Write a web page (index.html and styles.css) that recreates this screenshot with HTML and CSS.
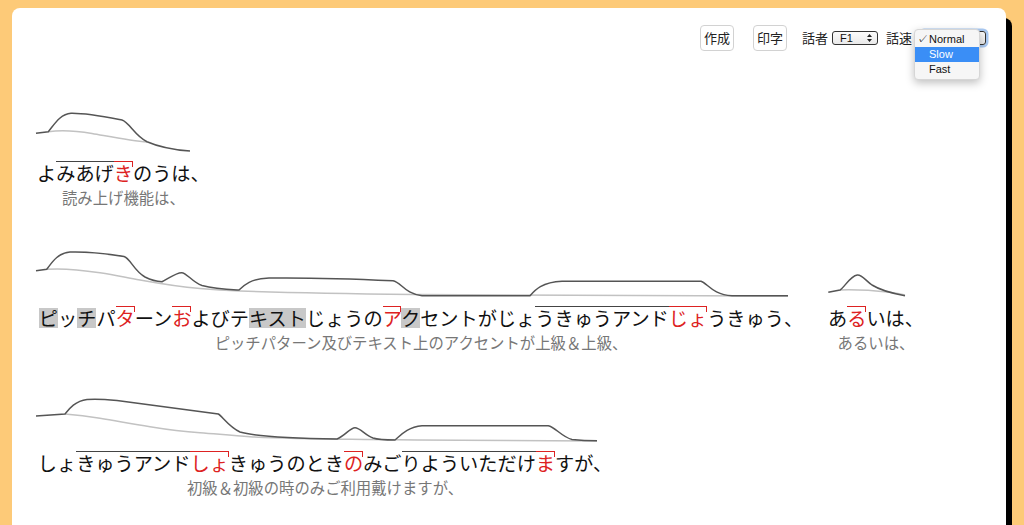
FILE: index.html
```html
<!DOCTYPE html>
<html lang="ja">
<head>
    <meta charset="UTF-8">
    <meta name="viewport" content="width=device-width, initial-scale=1.0">
    <title>よみあげ - アクセント表示</title>
    <link rel="stylesheet" href="styles.css">
</head>
<body>
    <div class="card">
        <div class="toolbar">
            <button class="btn">作成</button>
            <button class="btn btn-print">印字</button>
            <div class="field field-speaker">
                <span class="field-label">話者</span>
                <span class="select select-small">F1
                    <svg class="arrows" width="5" height="8" viewBox="0 0 5 8"><path d="M2.5 0 L5 3 L0 3 Z M2.5 8 L5 5 L0 5 Z" fill="#222"/></svg>
                </span>
            </div>
            <div class="field field-speed">
                <span class="field-label">話速</span>
                <span class="select select-speed open">
                    <span class="value">Normal</span>
                    <ul class="menu">
                        <li class="checked">Normal</li>
                        <li class="active">Slow</li>
                        <li>Fast</li>
                    </ul>
                </span>
            </div>
        </div>

        <div class="phrases">
            <div class="phrase">
                <svg class="pitch" width="172.8" height="60">
                    <path class="base" d="M11.3 32.7 C25 31, 40 32, 55 34.5 C75 38, 95 42, 110 43"/>
                    <path class="line" d="M-1 34.3 L11.3 32.7 C17 26, 23 15, 34 14.3 C50 14, 72 18.5, 85 21 C92 23, 98 37, 110 42.7 C122 48, 140 51, 153 52"/>
                </svg>
                <div class="kana">よ<span class="hi">みあげ</span><span class="acc">き</span>のうは、</div>
                <div class="sub">読み上げ機能は、</div>
            </div>

            <div class="phrase">
                <svg class="pitch" width="768" height="60">
                    <path class="base" d="M9.7 25.3 C25 24, 45 26, 63 28.7 C80 31, 90 34, 103 36 C125 40, 145 43, 163 44.5 C180 46, 190 46.5, 203 47 C260 49, 330 50, 376 50.5 C420 51, 460 51.5, 751 52"/>
                    <path class="line" d="M-1 26.7 L9.7 25.3 C14 20, 20 9, 33 8 C50 7.5, 75 10.5, 87 12.5 C93 14, 97 27, 108 33 C114 36, 120 37.5, 125 37.7 C131 35, 139 28.5, 144.7 28.7 C150 29, 155 38, 165 41.5 C178 45, 192 45.5, 202 46 C207 41, 214 34.5, 232 34 C270 33.5, 330 35.5, 356 36.7 C364 38, 368 50, 385 51.7 L493 51.7 C498 46, 505 38, 525 37.2 L664 37.2 C670 39, 676 51, 695 51.7 L751 51.7"/>
                </svg>
                <div class="kana"><span class="gr">ピ</span>ッ<span class="gr">チ</span>パ<span class="acc">タ</span>ーン<span class="acc">お</span>よびテ<span class="gr">キスト</span>じょうの<span class="acc">ア</span><span class="gr">ク</span>セントがじょ<span class="hi">うきゅうアンド</span><span class="acc">じょ</span>うきゅう、</div>
                <div class="sub">ピッチパターン及びテキスト上のアクセントが上級＆上級、</div>
            </div>

            <div class="phrase">
                <svg class="pitch" width="96" height="60">
                    <path class="base" d="M12 46 C25 45.5, 45 46.5, 62 48.3 C68 49, 73 50, 77 51"/>
                    <path class="line" d="M0.3 48.3 L12 46 C16 44, 22 32, 29.3 31 C34 30.5, 38 37, 44 41 C52 46, 62 49, 77 51.7"/>
                </svg>
                <div class="kana">あ<span class="acc">る</span>いは、</div>
                <div class="sub">あるいは、</div>
            </div>

            <div class="phrase">
                <svg class="pitch" width="576" height="60">
                    <path class="base" d="M28 25 C40 26, 55 28, 63 29.3 C80 32, 95 35, 113 37.7 C130 40.5, 145 42.5, 163 43.7 C180 45, 195 46.5, 213 47.7 C260 50, 320 51, 560 52"/>
                    <path class="line" d="M-1 27 L28 25 C32 20, 38 12, 50 10.5 C60 9.5, 70 10.5, 80 11.5 L181.3 25 C185 27, 192 38, 203 43 C220 48, 260 49.5, 300 50 C308 47, 313 38.7, 318 38.7 C323 38.7, 328 46, 336 49 C342 51, 350 51, 358 51 C363 47, 370 38, 385 36.7 L511.3 36.7 C518 38, 525 48, 535 50.5 C545 51.5, 555 51.7, 560 51.7"/>
                </svg>
                <div class="kana">しょ<span class="hi">きゅうアンド</span><span class="acc">しょ</span>きゅうのとき<span class="acc">の</span>みご<span class="hi">りよういただけ</span><span class="acc">ま</span>すが、</div>
                <div class="sub">初級＆初級の時のみご利用戴けますが、</div>
            </div>
        </div>
    </div>
</body>
</html>
```

FILE: styles.css
```css
html, body {
    margin: 0;
    overflow: hidden;
}
body {
    background-color: #fdca78;
    font-family: "Noto Sans CJK JP", sans-serif;
    color: #111;
}
.card {
    margin: 8px 18px 0 12px;
    height: calc(100vh - 8px);
    box-sizing: border-box;
    padding: 17px 20px 0 25px;
    background-color: white;
    border-radius: 8px 8px 0 0;
    box-shadow: 6px 10px 0 #000;
}

/* toolbar */
.toolbar {
    display: flex;
    justify-content: flex-end;
    align-items: center;
    height: 26px;
    margin-bottom: 48px;
}
.btn {
    height: 26px;
    padding: 0 3px;
    border: 1px solid #d2d2d2;
    border-radius: 4px;
    background-color: white;
    font-family: "Noto Sans CJK JP", sans-serif;
    font-size: 13px;
    line-height: 24px;
    color: #222;
}
.btn-print {
    margin-left: 19px;
}
.field {
    display: flex;
    align-items: center;
    font-size: 13px;
    color: #222;
}
.field-speaker {
    margin-left: 15px;
}
.field-speed {
    margin-left: 8px;
}
.field-label {
    line-height: 18px;
}
.select {
    position: relative;
    display: flex;
    align-items: center;
    box-sizing: border-box;
    height: 14px;
    border: 1px solid #333;
    border-radius: 3px;
    background: linear-gradient(#fbfbfb, #e9e9e9);
    font-family: "Liberation Sans", Arial, sans-serif;
    font-size: 10px;
    color: #111;
}
.select-small {
    width: 46px;
    margin-left: 4px;
    padding-left: 7px;
    font-size: 11px;
}
.arrows {
    position: absolute;
    right: 5px;
    top: 2px;
}
.select-speed {
    width: 65px;
    margin-left: 9px;
    padding-left: 8px;
    box-shadow: 0 0 0 2.5px #a9c9f2;
}
.select.open .value {
    visibility: hidden;
}

/* open dropdown */
.menu {
    position: absolute;
    left: -8px;
    top: -3px;
    width: 66px;
    margin: 0;
    padding: 2px 0;
    list-style: none;
    box-sizing: border-box;
    background-color: #f6f6f6;
    border: 1px solid #d6d6d6;
    border-radius: 4px;
    box-shadow: 0 3px 8px rgba(0,0,0,0.25);
    font-size: 11px;
    z-index: 2;
}
.menu li {
    position: relative;
    height: 15px;
    line-height: 15px;
    padding-left: 14px;
    color: #111;
}
.menu li.checked::before {
    content: "✓";
    position: absolute;
    left: 2px;
}
.menu li.active {
    background-color: #3a8ef6;
    color: white;
}

/* phrases */
.phrases {
    display: flex;
    flex-wrap: wrap;
    column-gap: 23px;
    row-gap: 37px;
    padding-right: 20px;
}
.phrase {
    display: flex;
    flex-direction: column;
    align-items: center;
}
.pitch {
    overflow: visible;
}
.pitch path {
    fill: none;
    stroke-width: 1.5;
}
.pitch .line {
    stroke: #555;
}
.pitch .base {
    stroke: #c2c2c2;
}
.kana {
    font-size: 19.2px;
    line-height: 28px;
    white-space: nowrap;
}
.sub {
    font-size: 15.36px;
    line-height: 20px;
    color: #777;
    white-space: nowrap;
}
.hi {
    background: linear-gradient(#444, #444) no-repeat 0 2px / 100% 1px;
}
.acc {
    color: #dd2222;
    background:
        linear-gradient(#dd2222, #dd2222) no-repeat 0 2px / 100% 1px,
        linear-gradient(#dd2222, #dd2222) no-repeat 100% 2px / 1px 6px;
}
.gr {
    background: linear-gradient(#c8c8c8, #c8c8c8) no-repeat 0 55% / 100% 72%;
}
```
